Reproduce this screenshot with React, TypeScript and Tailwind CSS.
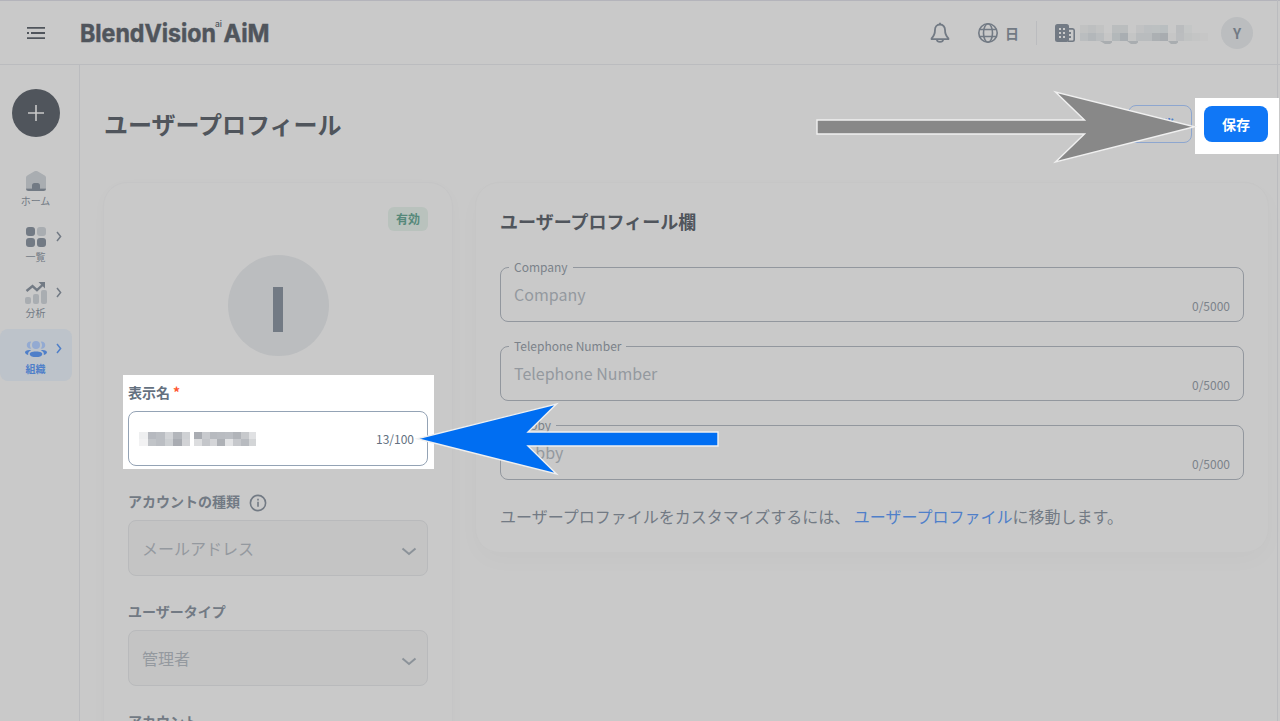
import type { ReactNode } from "react";
import clsx from "clsx";

const ChevronRight = () => (
  <svg width="6" height="11" viewBox="0 0 6 11" fill="none" className="absolute left-[55.5px] top-[14px]">
    <path d="M1 1l3.600 4.500L1 10" stroke="currentColor" strokeWidth="1.500" />
  </svg>
);

const ChevronDown = () => (
  <svg width="16" height="9" viewBox="0 0 16 9" fill="none" className="mt-[6px]">
    <path d="M1.500 1.500L8 6.900l6.500-5.400" stroke="#8b9299" strokeWidth="2" />
  </svg>
);

const HomeIcon = () => (
  <svg width="22" height="22" viewBox="0 0 22 22" className="mb-px">
    <path d="M1 18.500V8c0-1 .4-1.800 1.300-2.400L9.500 1.300c1-.5 2-.5 3 0l7.200 4.300C20.600 6.200 21 7 21 8v10.500z" fill="#a9adb1" />
    <path d="M1 18.500h6V15.500A2.500 2.500 0 0 1 9.500 13h3a2.500 2.500 0 0 1 2.500 2.500v3h6a2.500 2.500 0 0 1-2.500 2.500h-15A2.500 2.500 0 0 1 1 18.500z" fill="#727a84" />
  </svg>
);

const ListIcon = () => (
  <svg width="22" height="22" viewBox="0 0 22 22" fill="#727a84" className="mb-px">
    <rect x="1" y="1" width="9" height="9" rx="3" />
    <rect x="12" y="1" width="9" height="9" rx="3" fill="#a9adb1" />
    <rect x="1" y="12" width="9" height="9" rx="3" />
    <rect x="12" y="12" width="9" height="9" rx="3" />
  </svg>
);

const AnalyticsIcon = () => (
  <svg width="22" height="24" viewBox="0 0 22 24">
    <g fill="#a9adb1">
      <rect y="16" width="6" height="7" rx="2" />
      <rect x="8" y="13" width="6" height="10" rx="2" />
      <rect x="16" y="9" width="6" height="14" rx="2" />
    </g>
    <path d="M1.500 10L7.500 5l4.500 4.200L18 3.500" stroke="#727a84" strokeWidth="2.400" fill="none" />
    <path d="M13.500 1H20v6.500z" fill="#727a84" />
  </svg>
);

const OrgIcon = () => (
  <svg width="22" height="18" viewBox="0 0 22 18" className="mb-[3px]">
    <g fill="#93aad2">
      <circle cx="11" cy="5" r="4" />
      <path d="M6.200 1.700a6 6 0 0 0 0 7A3.600 3.600 0 1 1 6.200 1.700zM15.800 1.700a6 6 0 0 1 0 7 3.600 3.600 0 1 0 0-7z" />
    </g>
    <g fill="#4f7fc9">
      <path d="M11 11.500c4.500 0 6.700 1.300 6.200 2.900C16.700 16.300 14.500 17 11 17s-5.700-.7-6.200-2.600c-.5-1.600 1.700-2.900 6.200-2.900z" />
      <path d="M4.800 10C1.500 10 0 11 0 12.300c0 1.200 1 2.200 3.200 2.700-.3-2.200.3-3.600 3-4.800zM17.200 10c3.300 0 4.800 1 4.800 2.300 0 1.200-1 2.200-3.200 2.700.3-2.200-.3-3.600-3-4.800z" />
    </g>
  </svg>
);

const BellIcon = () => (
  <svg width="20" height="22" viewBox="0 0 20 22" fill="none" stroke="#727a84" strokeWidth="1.800">
    <path d="M10 2.500c-3.200 0-5 2.400-5 5.300 0 4.200-.8 6.200-3.400 8.600v.8h16.800v-.8C15.800 14 15 12 15 7.800c0-2.900-1.800-5.300-5-5.300z" strokeLinejoin="round" />
    <path d="M10 .8v1.700M6.800 17.500c.2 1.700 1.500 2.400 3.200 2.400s3-.7 3.200-2.400" />
  </svg>
);

const GlobeIcon = () => (
  <svg width="20" height="20" viewBox="0 0 20 20" fill="none" stroke="#727a84" strokeWidth="1.600">
    <circle cx="10" cy="10" r="9.200" />
    <ellipse cx="10" cy="10" rx="4.500" ry="9.200" />
    <path d="M1.500 6.500h17M1.500 13.500h17" />
  </svg>
);

const CompanyIcon = () => (
  <svg width="20" height="18" viewBox="0 0 20 18">
    <path d="M13 4.900h4.500a1.700 1.700 0 0 1 1.700 1.700v8.900a1.700 1.700 0 0 1-1.700 1.700H13" fill="none" stroke="#727a84" strokeWidth="1.600" />
    <rect width="14" height="18" rx="2.500" fill="#727a84" />
    <path d="M4 4h2v2H4zM8 4h2v2H8zM4 8h2v2H4zM8 8h2v2H8zM4 12h2v2H4zM8 12h2v2H8z" fill="#c9c9c9" />
    <path d="M14 8h2v2h-2zM14 12h2v2h-2z" fill="#727a84" />
  </svg>
);

type NavItemProps = {
  label: string;
  icon: ReactNode;
  active?: boolean;
  expandable?: boolean;
};

const NavItem = ({ label, icon, active, expandable }: NavItemProps) => (
  <li
    className={clsx(
      "relative flex h-[52px] w-[72px] flex-col items-center rounded-lg",
      active ? "bg-[#bdc3ca] font-bold text-[#4f7fc9]" : "text-[#727a84]"
    )}
  >
    <div className="flex h-[32px] items-end justify-center">{icon}</div>
    <span className="mr-px text-[10px] leading-[16px]">{label}</span>
    {expandable && <ChevronRight />}
  </li>
);

const ProfileField = ({ label }: { label: string }) => (
  <div className="relative flex h-[55px] items-center justify-between rounded-lg border border-[#92979e] px-[13px]">
    <span className="absolute -top-[10px] left-[8px] bg-[#c9c9c9] px-[5px] text-xs leading-[18px] text-[#7b828a]">
      {label}
    </span>
    <span className="mb-[2px] text-base text-[#94999f]">{label}</span>
    <span className="mt-[22px] text-xs text-[#7b828a]">0/5000</span>
  </div>
);

const SelectField = ({ value }: { value: string }) => (
  <div className="flex h-[56px] items-center justify-between rounded-lg border border-[#b9babc] bg-[#c4c4c4] pr-[10px] pl-[13px]">
    <span className="text-base text-[#94999f]">{value}</span>
    <ChevronDown />
  </div>
);

type MosaicProps = {
  colors: string[];
  size: number;
  rowHeight: number;
  className?: string;
};

// Pixelated bars standing in for hidden names, colours run top/bottom per column
const Mosaic = ({ colors, size, rowHeight, className }: MosaicProps) => (
  <svg width={(colors.length / 2) * size} height={rowHeight * 2} className={className} shapeRendering="crispEdges">
    {colors.map((color, i) => (
      <rect
        key={i}
        x={Math.floor(i / 2) * size}
        y={(i % 2) * rowHeight}
        width={size}
        height={rowHeight}
        fill={color}
      />
    ))}
  </svg>
);

const firstName = ["#eeeff0", "#f2f2f3", "#b6b9bf", "#c1c4c8", "#bbbec3", "#bbbec3", "#d2d4d7", "#cccfd2", "#b3b6bb", "#a9acb2", "#cfd1d4", "#d2d3d6"];
const lastName = ["#a9acb2", "#dcdddf", "#c8cace", "#c4c6ca", "#b7babf", "#d4d5d8", "#b9bcc1", "#aeb1b6", "#bbbec3", "#e2e3e5", "#b1b4b9", "#c6c8cc", "#c7c9cc", "#b8bbc0", "#e0e1e3", "#d3d5d7"];
const companyName = [
  "#c1c2c2", "#babdbf", "#bdbfc0", "#b3b7ba", "#c2c3c3", "#babdbf", "#c9c9c9", "#c6c6c6",
  "#babdbe", "#b3b8ba", "#babdbe", "#a9aeb2", "#c9c9c9", "#c4c5c5", "#c1c2c3", "#b9bcbe",
  "#bcbfc1", "#b9bcbe", "#bcc0c1", "#acb0b3", "#b9bec0", "#a8acb0", "#c9c9c9", "#c6c6c6",
  "#babcbe", "#bbbdbf", "#c4c6c6", "#c1c3c3", "#c9c9c9", "#c4c5c5", "#c9c9c9", "#c6c6c6",
];

const Header = () => (
  <header className="flex h-[65px] shrink-0 items-center border-t border-b border-t-[#b4b4bb] border-b-[#bbbcbf] pr-[27px] pl-[27px]">
    <svg width="18" height="12" viewBox="0 0 18 12" stroke="#50555c" strokeWidth="1.800">
      <path d="M0 .9h18M4 6h14M0 6h2M0 11.100h18" />
    </svg>
    <svg
      width="200"
      height="40"
      className="ml-[35px] overflow-visible"
      fill="#50555c"
      stroke="#50555c"
      fontFamily="Inter, sans-serif"
    >
      <text x="0" y="28.500" fontSize="24.500" fontWeight="700" strokeWidth="0.500" textLength="136" lengthAdjust="spacingAndGlyphs">BlendVision</text>
      <text x="135" y="14" fontSize="9" fontWeight="500" strokeWidth="0" textLength="7" lengthAdjust="spacingAndGlyphs">ai</text>
      <text x="143.500" y="28.500" fontSize="24.500" fontWeight="700" strokeWidth="0.500" textLength="46" lengthAdjust="spacingAndGlyphs">AiM</text>
    </svg>
    <div className="ml-auto flex items-center">
      <BellIcon />
      <div className="ml-[28px] flex items-center gap-[7px]">
        <GlobeIcon />
        <span className="text-sm font-bold text-[#727a84]">日</span>
      </div>
      <div className="ml-[17px] h-6 w-px bg-[#bbbcbf]" />
      <div className="ml-[18px] flex items-center">
        <CompanyIcon />
        <div className="relative ml-[5px] w-[136px]">
          <Mosaic colors={companyName} size={8} rowHeight={8} />
          <svg width="88" height="3" className="absolute top-4 left-[20px]" fill="#a9adb0">
            <path d="M0 0h12v1.500L10 3H5zM27 0h11v1.500L36 3h-5zM68 0h10v1.500L76 3h-5z" />
          </svg>
        </div>
      </div>
      <div className="ml-[5px] flex size-8 items-center justify-center rounded-full bg-[#bbbdbf] text-sm font-bold text-[#727a84]">
        Y
      </div>
    </div>
  </header>
);

const Sidebar = () => (
  <aside className="w-20 shrink-0 border-r border-[#bbbcbf] pt-6">
    <button className="ml-3 flex size-12 items-center justify-center rounded-full bg-[#50555c]">
      <svg width="16" height="16" stroke="#c9c9c9" strokeWidth="1.600">
        <path d="M8 0v16M0 8h16" />
      </svg>
    </button>
    <ul className="mt-6 flex flex-col gap-1">
      <NavItem label="ホーム" icon={<HomeIcon />} />
      <NavItem label="一覧" icon={<ListIcon />} expandable />
      <NavItem label="分析" icon={<AnalyticsIcon />} expandable />
      <NavItem label="組織" icon={<OrgIcon />} active expandable />
    </ul>
  </aside>
);

const UserCard = () => (
  <section className="flex h-[700px] w-[350px] shrink-0 flex-col rounded-3xl border border-[#c5c5c6] px-6 pt-6 shadow-[0_4px_16px_rgba(0,0,0,0.02)]">
    <span className="flex h-6 w-10 items-center justify-center self-end rounded-md bg-[#b9c2bd] text-xs font-bold text-[#56897a]">
      有効
    </span>
    <div className="mt-6 flex size-[101px] items-center justify-center self-center rounded-full bg-[#bbbdbf]">
      <svg width="10" height="45" className="mt-[8px]">
        <rect width="10" height="45" fill="#727a84" />
      </svg>
    </div>
    <div className="-mr-[6px] -ml-[5px] mt-[19px] h-[94px] shrink-0 bg-white pr-[6px] pl-[5px]">
      <label className="flex h-9 items-center pb-[2px] text-sm font-bold text-[#64717f]">
        表示名<span className="ml-[3px] text-[#ff5630]">*</span>
      </label>
      <div className="flex h-[55px] items-center rounded-lg border border-[#94a3b5] px-[13px]">
        <Mosaic colors={firstName} size={8.5} rowHeight={7} className="-ml-[3px]" />
        <Mosaic colors={lastName} size={7.8} rowHeight={7} className="ml-[4px]" />
        <span className="ml-auto text-xs text-[#64717f]">13/100</span>
      </div>
    </div>
    <div className="mt-[22px] flex h-[29px] shrink-0 items-start gap-[9px] text-sm leading-[21px] font-bold text-[#727a84]">
      アカウントの種類
      <svg width="18" height="18" viewBox="0 0 18 18" fill="none" stroke="#727a84" strokeWidth="1.600" className="mt-[3px]">
        <circle cx="9" cy="9" r="7.600" />
        <path d="M9 7.800v5M9 4.800v1.600" />
      </svg>
    </div>
    <SelectField value="メールアドレス" />
    <div className="mt-[25px] h-[29px] text-sm leading-[21px] font-bold text-[#727a84]">ユーザータイプ</div>
    <SelectField value="管理者" />
    <div className="mt-[25px] h-[29px] text-sm leading-[21px] font-bold text-[#727a84]">アカウント</div>
  </section>
);

const ProfileCard = () => (
  <section className="flex h-[371px] w-[794px] shrink-0 flex-col rounded-3xl border border-[#c6c6c6] px-6 pt-6 shadow-[0_8px_24px_rgba(0,0,0,0.02)]">
    <h2 className="text-lg leading-[28px] font-bold text-[#50555c]">ユーザープロフィール欄</h2>
    <div className="mt-[32px] flex flex-col gap-6">
      <ProfileField label="Company" />
      <ProfileField label="Telephone Number" />
      <ProfileField label="Hobby" />
    </div>
    <p className="mt-6 text-base text-[#727a84]">
      ユーザープロファイルをカスタマイズするには、 <a className="text-[#4f7fc9]">ユーザープロファイル</a>に移動します。
    </p>
  </section>
);

const App = () => {
  return (
    <div className="relative flex h-[721px] w-[1280px] flex-col overflow-hidden bg-[#c9c9c9] font-['Noto_Sans_CJK_JP',sans-serif]">
      <Header />
      <div className="flex min-h-0 flex-1">
        <Sidebar />
        <main className="w-[1200px] shrink-0 pt-[33px] pl-[23px]">
          <div className="flex h-14 w-[1176px] items-center pl-px">
            <h1 className="mb-1 text-2xl leading-[36px] font-bold text-[#50555c]">ユーザープロフィール</h1>
            <button className="mr-[3px] mb-1 ml-auto h-[38px] w-16 rounded-lg border border-[#8da6cf] text-sm font-bold text-[#4f7fc9]">
              取消
            </button>
            <div className="flex h-14 w-[84px] items-start bg-white pt-2 pl-[9px]">
              <button className="h-9 w-16 rounded-lg bg-[#1077f6] text-sm font-bold text-white">保存</button>
            </div>
          </div>
          <div className="mt-7 flex items-start gap-[22px]">
            <UserCard />
            <ProfileCard />
          </div>
        </main>
      </div>
      {/* scrollbar edge */}
      <div className="absolute top-0 right-[2px] h-[98px] w-px bg-[#bbbcbf]" />
      <div className="absolute top-[154px] right-[2px] bottom-0 w-px bg-[#bbbcbf]" />
      <svg width="384" height="76" className="absolute top-[89px] left-[815px]">
        <path d="M2 31H269.500L240.500 3 379.500 37.800 240.500 73 269.500 45H2z" fill="#888" stroke="#f0f0f0" strokeWidth="1.400" strokeMiterlimit="10" />
      </svg>
      <svg width="308" height="76" className="absolute top-[401px] left-[412px]">
        <path d="M306 31H116L144.500 3 5 37.800 144.500 73 116 45H306z" fill="#006ef2" stroke="#f0f0f0" strokeWidth="1.400" strokeMiterlimit="10" />
      </svg>
    </div>
  );
};

export default App;
